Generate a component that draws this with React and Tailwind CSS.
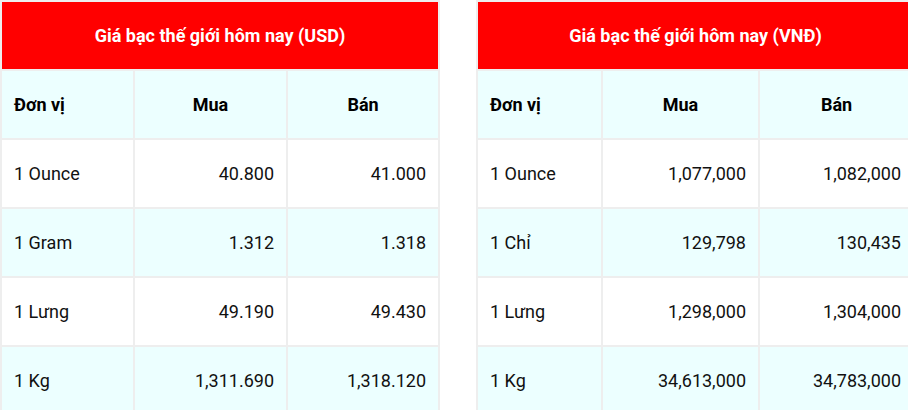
import React from "react";

const usd = {
  title: "Giá bạc thế giới hôm nay (USD)",
  widths: ["w-[133px]", "w-[153px]", "w-[152px]"],
  rows: [
    ["1 Ounce", "40.800", "41.000"],
    ["1 Gram", "1.312", "1.318"],
    ["1 Lưng", "49.190", "49.430"],
    ["1 Kg", "1,311.690", "1,318.120"],
  ],
};

const vnd = {
  title: "Giá bạc thế giới hôm nay (VNĐ)",
  widths: ["w-[125px]", "w-[157px]", "w-[155px]"],
  rows: [
    ["1 Ounce", "1,077,000", "1,082,000"],
    ["1 Chỉ", "129,798", "130,435"],
    ["1 Lưng", "1,298,000", "1,304,000"],
    ["1 Kg", "34,613,000", "34,783,000"],
  ],
};

function PriceTable({ data }) {
  const [w1, w2, w3] = data.widths;
  return (
    <table className="shrink-0 border-separate border-spacing-0 border-l-2 border-t-2 border-[#eeeeee] table-fixed">
      <thead>
        <tr>
          <th colSpan={3} className="bg-[#ff0000] border-r-2 border-b-2 border-[#eeeeee] p-0">
            <div className="h-[67px] flex items-center justify-center text-white font-bold text-[18px]">
              {data.title}
            </div>
          </th>
        </tr>
        <tr className="bg-[#ecffff]">
          <th className={`${w1} border-r-2 border-b-2 border-[#eeeeee] p-0`}>
            <div className="h-[67px] flex items-center px-[12px] font-bold text-[18px] text-black">Đơn vị</div>
          </th>
          <th className={`${w2} border-r-2 border-b-2 border-[#eeeeee] p-0`}>
            <div className="h-[67px] flex items-center justify-center px-[12px] font-bold text-[18px] text-black">Mua</div>
          </th>
          <th className={`${w3} border-r-2 border-b-2 border-[#eeeeee] p-0`}>
            <div className="h-[67px] flex items-center justify-center px-[12px] font-bold text-[18px] text-black">Bán</div>
          </th>
        </tr>
      </thead>
      <tbody>
        {data.rows.map((r, i) => (
          <tr key={i} className={i % 2 === 1 ? "bg-[#ecffff]" : "bg-white"}>
            <td className="border-r-2 border-b-2 border-[#eeeeee] p-0">
              <div className="h-[67px] flex items-center px-[12px] text-[18px] text-[#111]">{r[0]}</div>
            </td>
            <td className="border-r-2 border-b-2 border-[#eeeeee] p-0">
              <div className="h-[67px] flex items-center justify-end px-[12px] text-[18px] text-[#111]">{r[1]}</div>
            </td>
            <td className="border-r-2 border-b-2 border-[#eeeeee] p-0">
              <div className="h-[67px] flex items-center justify-end px-[12px] text-[18px] text-[#111]">{r[2]}</div>
            </td>
          </tr>
        ))}
      </tbody>
    </table>
  );
}

export default function App() {
  return (
    <div className="w-[908px] h-[410px] overflow-hidden bg-white font-['Roboto',sans-serif]">
      <div className="flex items-start gap-[36px] w-max">
        <PriceTable data={usd} />
        <PriceTable data={vnd} />
      </div>
    </div>
  );
}
